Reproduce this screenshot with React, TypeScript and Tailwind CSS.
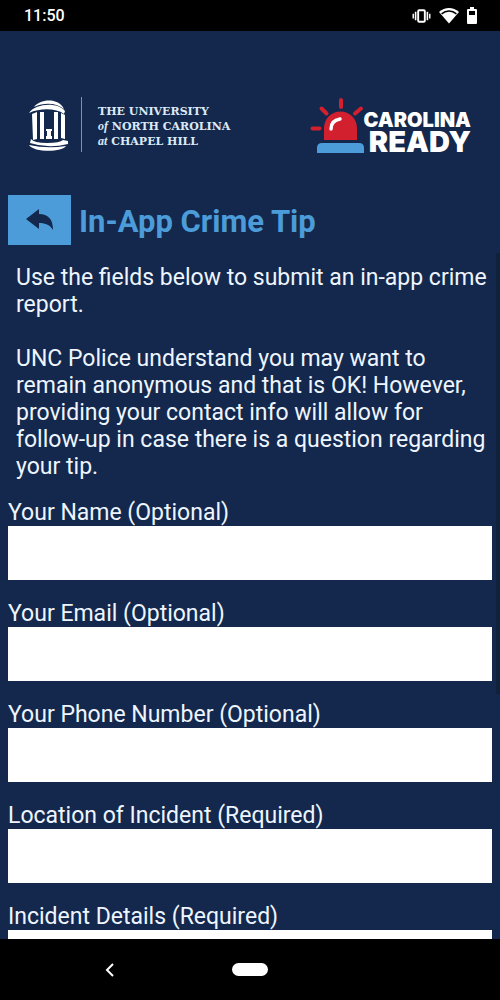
import React, { useState } from 'react';

interface Field {
  id: string;
  label: string;
  type: string;
}

const fields: Field[] = [
  { id: 'name', label: 'Your Name (Optional)', type: 'text' },
  { id: 'email', label: 'Your Email (Optional)', type: 'email' },
  { id: 'phone', label: 'Your Phone Number (Optional)', type: 'tel' },
  { id: 'location', label: 'Location of Incident (Required)', type: 'text' },
];

const StatusBar: React.FC = () => (
  <div className="flex h-[31px] shrink-0 items-center justify-between bg-black pl-6 pr-[23px] text-white">
    <span className="text-[16px] font-medium">11:50</span>
    <div className="flex items-center gap-2">
      {/* Vibrate */}
      <svg width="19" height="16" viewBox="0 0 20 16" fill="none" stroke="currentColor">
        <rect x="6.5" y="2" width="7" height="12" rx="1" strokeWidth="2" />
        <path d="M3.8 3.5v9M16.2 3.5v9" strokeWidth="1.7" />
        <path d="M1.3 5.5v5M18.7 5.5v5" strokeWidth="1.5" />
      </svg>
      {/* Wifi */}
      <svg width="20" height="17" viewBox="0 0 20 16">
        <path d="M0 4.6C6-.8 14-.8 20 4.6L10 16z" fill="currentColor" />
        <path d="M2.6 6.4C7 2.4 13 2.4 17.4 6.4" fill="none" stroke="#000" strokeWidth="1.5" />
      </svg>
      {/* Battery */}
      <svg width="10" height="17" viewBox="0 0 10 17">
        <path d="M3 0h4v2h2q1 0 1 1v13q0 1-1 1H1q-1 0-1-1V3q0-1 1-1h2z" fill="currentColor" />
        <path d="M2 4h6v4H2z" fill="#000" />
      </svg>
    </div>
  </div>
);

const OldWell: React.FC = () => (
  <svg width="42" height="52" viewBox="0 0 42 52" fill="#fff" aria-hidden="true">
    <path d="M6 8C12-.5 31-1.5 36 10 28 4 17 3 6 8z" />
    <path d="M1 14C8 4 30 3 37 12l-1 3C28 9 12 9 1 14z" />
    <path d="M4 15l5-2v27l-4 1zM12 13h4v27h-4zM26 13h4v27h-4zM33 14l4 2v24l-4-1z" />
    <path d="M18 30h6v2h-1v5h1v3h-6v-3h1v-5h-1z" />
    <path d="M3 40q3 4 16 4t16-3l5 1v3q-20 5-38-1z" />
    <path d="M1 46q18 4 37 1c-3 6-32 7-37-1z" />
  </svg>
);

const Siren: React.FC = () => (
  <svg width="54" height="56" viewBox="0 0 54 56" fill="none" aria-hidden="true">
    <path d="M2.5 31.5h7M11.5 11.5l5 5M31 3v7M51 11.5l-6 5" stroke="#d2202f" strokeWidth="4" strokeLinecap="round" />
    <path d="M14 43V31a16.5 16.5 0 0 1 33 0v12z" fill="#d2202f" />
    <path d="M21 32c0-5 3-9 9-10" stroke="#fff" strokeWidth="3.5" strokeLinecap="round" />
    <path d="M7 56v-5q0-5 5-5h37q5 0 5 5v5z" fill="#4b9cd9" />
  </svg>
);

const Header: React.FC = () => (
  <header className="flex items-start justify-between pl-5 pr-[21px] pt-[66px] text-white">
    <div className="flex items-center">
      <OldWell />
      <div className="ml-[11px] h-[55px] w-px bg-[#7f90ab]" />
      <p className="ml-4 pt-1 font-['DejaVu_Serif',serif] text-[11px] font-bold leading-[15px] text-[#dce9f7]">
        THE UNIVERSITY
        <br />
        <i className="font-['Liberation_Serif',serif] text-[12px] font-bold">of</i> NORTH CAROLINA
        <br />
        <i className="font-['Liberation_Serif',serif] text-[12px] font-bold">at</i> CHAPEL HILL
      </p>
    </div>
    <div className="flex items-end">
      <Siren />
      <p className="flex flex-col items-end font-['Inter',sans-serif] font-black">
        <span className="text-[20px] leading-[22px]">CAROLINA</span>
        <span className="text-[29px] leading-[22px]">READY</span>
      </p>
    </div>
  </header>
);

const App: React.FC = () => {
  const [values, setValues] = useState<Record<string, string>>({});

  const update = (id: string, value: string) => {
    setValues(prev => ({ ...prev, [id]: value }));
  };

  return (
    <div className="flex h-screen flex-col bg-[#13284c] font-['Roboto',sans-serif]">
      <StatusBar />
      <main className="relative min-h-0 flex-1 overflow-hidden px-2">
        <Header />

        <div className="mt-[42px] flex items-center gap-2">
          <button type="button" aria-label="Back" className="flex h-[50px] w-[63px] items-center justify-center bg-[#4b9cd9] text-[#13284c]">
            <svg width="28" height="22" viewBox="0 0 28 22" fill="currentColor">
              <path d="M0 10L13 0v5c9 0 14 5 14 16-3-5-7-7-14-7v6z" />
            </svg>
          </button>
          <h1 className="pt-1 text-[31px] font-bold leading-10 text-[#4b9cd9]">In-App Crime Tip</h1>
        </div>

        <form className="text-[23px] leading-[27px] text-[#eef5ff]">
          <div className="mt-[19px] flex flex-col gap-[27px] pl-2">
            <p>Use the fields below to submit an in-app crime report.</p>
            <p>
              UNC Police understand you may want to remain anonymous and that is OK! However, providing your
              contact info will allow for follow-up in case there is a question regarding your tip.
            </p>
          </div>

          <div className="mt-[19px] flex flex-col gap-5">
            {fields.map(field => (
              <div key={field.id}>
                <label htmlFor={field.id} className="block">{field.label}</label>
                <input
                  id={field.id}
                  type={field.type}
                  className="block h-[54px] w-full bg-white px-2 text-[#13284c] outline-none"
                  value={values[field.id] ?? ''}
                  onChange={e => update(field.id, e.target.value)}
                />
              </div>
            ))}
            <div>
              <label htmlFor="details" className="block">Incident Details (Required)</label>
              <textarea
                id="details"
                rows={5}
                className="block w-full resize-none bg-white px-2 text-[#13284c] outline-none"
                value={values.details ?? ''}
                onChange={e => update('details', e.target.value)}
              />
            </div>
          </div>
        </form>

        {/* Scroll thumb */}
        <div className="absolute right-0 top-[222px] h-[441px] w-1 bg-[#10213c]" />
      </main>

      <nav className="flex h-[61px] shrink-0 items-center bg-black text-white">
        <div className="flex flex-1 justify-center pr-3">
          <button type="button" aria-label="Go back">
            <svg width="10" height="14" viewBox="0 0 10 14" fill="none" stroke="currentColor" strokeWidth="2">
              <path d="M8 1L2 7l6 6" />
            </svg>
          </button>
        </div>
        <button type="button" aria-label="Home" className="h-[13px] w-9 rounded-full bg-white" />
        <div className="flex-1 pl-3" />
      </nav>
    </div>
  );
};

export default App;
